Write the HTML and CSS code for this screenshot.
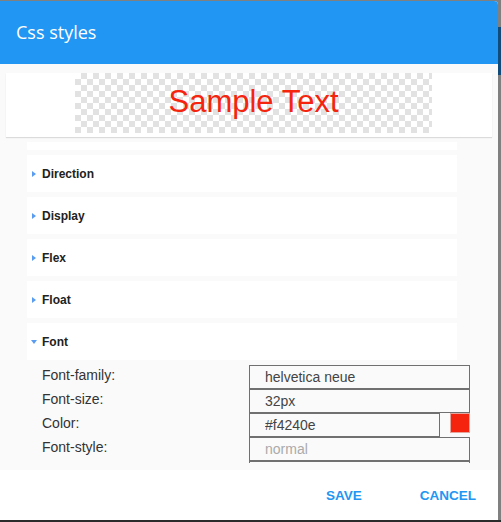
FILE: index.html
```html
<!DOCTYPE html>
<html lang="en">
<head>
<meta charset="utf-8">
<title>Css styles</title>
<link rel="stylesheet" href="styles.css">
</head>
<body>
<div class="dialog">
  <header class="dialog-header">
    <h1 class="dialog-title">Css styles</h1>
  </header>
  <div class="dialog-body">
    <div class="preview">
      <div class="preview-canvas"><span class="preview-text">Sample Text</span></div>
    </div>
    <div class="scroll-wrap">
      <div class="scroll">
        <div class="list">
          <div class="section first">
            <div class="section-head"></div>
          </div>
          <div class="section">
            <div class="section-head"><span class="caret-box"><span class="caret caret-right"></span></span><span class="section-title">Direction</span></div>
          </div>
          <div class="section">
            <div class="section-head"><span class="caret-box"><span class="caret caret-right"></span></span><span class="section-title">Display</span></div>
          </div>
          <div class="section">
            <div class="section-head"><span class="caret-box"><span class="caret caret-right"></span></span><span class="section-title">Flex</span></div>
          </div>
          <div class="section">
            <div class="section-head"><span class="caret-box"><span class="caret caret-right"></span></span><span class="section-title">Float</span></div>
          </div>
          <div class="section open">
            <div class="section-head"><span class="caret-box"><span class="caret caret-down"></span></span><span class="section-title">Font</span></div>
            <div class="fields">
              <label class="field-label">Font-family:</label>
              <div class="field-cell"><input class="field-input" type="text" value="helvetica neue"></div>
              <label class="field-label">Font-size:</label>
              <div class="field-cell"><input class="field-input" type="text" value="32px"></div>
              <label class="field-label">Color:</label>
              <div class="field-cell"><input class="field-input color-input" type="text" value="#f4240e"><span class="swatch"></span></div>
              <label class="field-label">Font-style:</label>
              <div class="field-cell"><input class="field-input" type="text" placeholder="normal"></div>
              <span class="field-label"></span>
              <div class="field-cell"><input class="field-input" type="text" aria-label="Font-weight"></div>
            </div>
          </div>
        </div>
      </div>
    </div>
  </div>
  <footer class="dialog-footer">
    <button class="btn" type="button">SAVE</button>
    <button class="btn" type="button">CANCEL</button>
  </footer>
</div>
</body>
</html>
```
FILE: styles.css
```css
html, body {
  margin: 0;
  padding: 0;
  height: 522px;
  overflow: hidden;
}
body {
  background: linear-gradient(to bottom, #808080 0, #808080 27px, #114b79 27px, #114b79 75px, #808080 75px, #808080 520px, #2b2b2b 520px);
  font-family: "Liberation Sans", Arial, sans-serif;
}
.dialog {
  width: 498px;
  height: 519px;
  margin-top: 1px;
  background: #fff;
  border-radius: 0 4px 0 0;
  overflow: hidden;
  display: flex;
  flex-direction: column;
}
.dialog-header {
  background: #2196f3;
  height: 63px;
  flex: none;
}
.dialog-title {
  margin: 0;
  padding-left: 16px;
  font-family: "Open Sans", sans-serif;
  font-weight: 400;
  font-size: 18px;
  line-height: 63px;
  color: #fff;
}
.dialog-body {
  background: #fafafa;
  flex: none;
  padding-top: 9px;
}
.preview {
  margin: 0 6px;
  height: 64px;
  background: #fff;
  box-shadow: 0 1px 1px rgba(0, 0, 0, 0.12);
}
.preview-canvas {
  margin-left: 69px;
  width: 357px;
  height: 60px;
  display: flex;
  align-items: center;
  justify-content: center;
  background: repeating-conic-gradient(#e2e2e2 0 25%, #ffffff 0 50%) 0 0 / 12px 12px;
}
.preview-text {
  font-size: 31px;
  line-height: 36px;
  margin-top: -2px;
  color: #f4240e;
}
.scroll-wrap {
  margin-top: 5px;
  padding-bottom: 7px;
}
.scroll {
  height: 321px;
  overflow: hidden;
}
.list {
  padding-left: 27px;
}
.section {
  margin-bottom: 5px;
}
.section.first .section-head {
  height: 8px;
}
.section-head {
  width: 430px;
  height: 37px;
  background: #fff;
  display: flex;
  align-items: center;
}
.caret-box {
  width: 8px;
  margin-left: 3px;
  margin-right: 4px;
  display: flex;
  justify-content: center;
  align-items: center;
}
.caret {
  width: 0;
  height: 0;
}
.caret-right {
  border-left: 4px solid #5a9cf0;
  border-top: 3.5px solid transparent;
  border-bottom: 3.5px solid transparent;
}
.caret-down {
  border-top: 4px solid #5a9cf0;
  border-left: 3.5px solid transparent;
  border-right: 3.5px solid transparent;
}
.section-title {
  font-size: 12px;
  font-weight: 700;
  color: #222;
}
.fields {
  margin-top: 5px;
  margin-left: 15px;
  display: grid;
  grid-template-columns: 207px 221px;
  grid-auto-rows: 24px;
}
.field-label {
  font-size: 14px;
  line-height: 21px;
  color: #333;
}
.field-cell {
  display: flex;
  align-items: flex-start;
}
.field-input {
  box-sizing: border-box;
  width: 221px;
  height: 24px;
  margin: 0;
  border: 1px solid #707070;
  border-radius: 0;
  background: #fafafa;
  padding: 0 0 0 15px;
  font-family: "Liberation Sans", Arial, sans-serif;
  font-size: 14px;
  color: #444;
  outline: none;
}
.field-input::placeholder {
  color: #aaa;
}
.color-input {
  width: 191px;
}
.swatch {
  box-sizing: border-box;
  width: 20px;
  height: 20px;
  margin-left: 10px;
  background: #f4240e;
  border: 1px solid #e6a59c;
}
.dialog-footer {
  flex: 1;
  display: flex;
  align-items: center;
  justify-content: flex-end;
  padding-right: 22px;
  gap: 58px;
}
.btn {
  border: 0;
  background: transparent;
  padding: 0;
  font-family: "Liberation Sans", Arial, sans-serif;
  font-size: 13.5px;
  font-weight: 700;
  color: #2196f3;
  cursor: pointer;
}
```
